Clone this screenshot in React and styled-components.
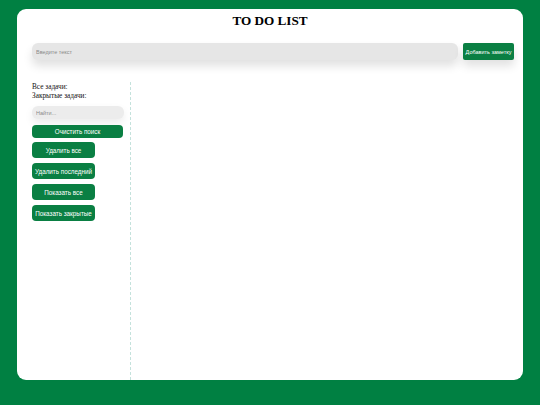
import React from "react";
import styled, { createGlobalStyle } from "styled-components";

const Global = createGlobalStyle`
  html, body { margin: 0; padding: 0; }
  body {
    background: #008042;
    height: 405px;
    overflow: hidden;
    font-family: "Liberation Serif", "Times New Roman", serif;
  }
  #root { padding: 9px 17px 0 17px; }
`;

const Card = styled.div`
  background: #ffffff;
  border-radius: 9px;
  height: 371px;
  box-sizing: border-box;
  padding: 4px 9px 0 15px;
  display: flex;
  flex-direction: column;
`;

const Title = styled.h1`
  margin: 0;
  font-family: "Liberation Serif", "Times New Roman", serif;
  font-size: 13.2px;
  line-height: 16px;
  font-weight: bold;
  text-align: center;
  color: #000;
  padding-right: 6px;
`;

const AddRow = styled.div`
  display: flex;
  align-items: center;
  gap: 5px;
  margin-top: 14px;
  height: 17px;
`;

const TextInput = styled.input`
  flex: 1;
  height: 17px;
  box-sizing: border-box;
  border: none;
  outline: none;
  background: #e6e6e6;
  border-radius: 6px;
  padding: 0 4px;
  font-family: "Liberation Sans", Arial, sans-serif;
  font-size: 5.5px;
  color: #333;
  box-shadow: 0 6px 10px rgba(0, 0, 0, 0.12);
  &::placeholder { color: #8a8a8a; }
`;

const GreenButton = styled.button`
  background: #0a7f43;
  color: #ffffff;
  border: none;
  font-family: "Liberation Sans", Arial, sans-serif;
  font-weight: normal;
  padding: 0;
  cursor: pointer;
  white-space: nowrap;
`;

const AddButton = styled(GreenButton)`
  width: 51px;
  height: 17px;
  border-radius: 2px;
  font-size: 5.5px;
  box-shadow: 0 6px 10px rgba(0, 0, 0, 0.12);
`;

const Main = styled.div`
  flex: 1;
  display: flex;
  margin-top: 22px;
`;

const Sidebar = styled.div`
  width: 99px;
  box-sizing: border-box;
  border-right: 1px dashed #c4e2dc;
  display: flex;
  flex-direction: column;
  align-items: flex-start;
`;

const Stat = styled.div`
  font-family: "Liberation Serif", "Times New Roman", serif;
  font-size: 7.3px;
  line-height: 9px;
  color: #111;
`;

const SearchInput = styled.input`
  width: 92px;
  height: 13px;
  box-sizing: border-box;
  margin-top: 6px;
  border: none;
  outline: none;
  background: #ececec;
  border-radius: 6px;
  padding: 0 4px;
  font-family: "Liberation Sans", Arial, sans-serif;
  font-size: 5.5px;
  box-shadow: 0 4px 8px rgba(0, 0, 0, 0.08);
  &::placeholder { color: #8a8a8a; }
`;

const ClearButton = styled(GreenButton)`
  width: 91px;
  height: 13px;
  margin-top: 6px;
  border-radius: 4px;
  font-size: 6.3px;
`;

const SideButton = styled(GreenButton)`
  width: 63px;
  height: 16px;
  margin-top: ${(p) => (p.$first ? "4px" : "5px")};
  border-radius: 4px;
  font-size: 6.3px;
`;

const Content = styled.div`
  flex: 1;
`;

export default function App() {
  return (
    <>
      <Global />
      <Card>
        <Title>TO DO LIST</Title>
        <AddRow>
          <TextInput placeholder="Введите текст" />
          <AddButton>Добавить заметку</AddButton>
        </AddRow>
        <Main>
          <Sidebar>
            <Stat>Все задачи:</Stat>
            <Stat>Закрытые задачи:</Stat>
            <SearchInput placeholder="Найти..." />
            <ClearButton>Очистить поиск</ClearButton>
            <SideButton $first>Удалить все</SideButton>
            <SideButton>Удалить последний</SideButton>
            <SideButton>Показать все</SideButton>
            <SideButton>Показать закрытые</SideButton>
          </Sidebar>
          <Content />
        </Main>
      </Card>
    </>
  );
}
